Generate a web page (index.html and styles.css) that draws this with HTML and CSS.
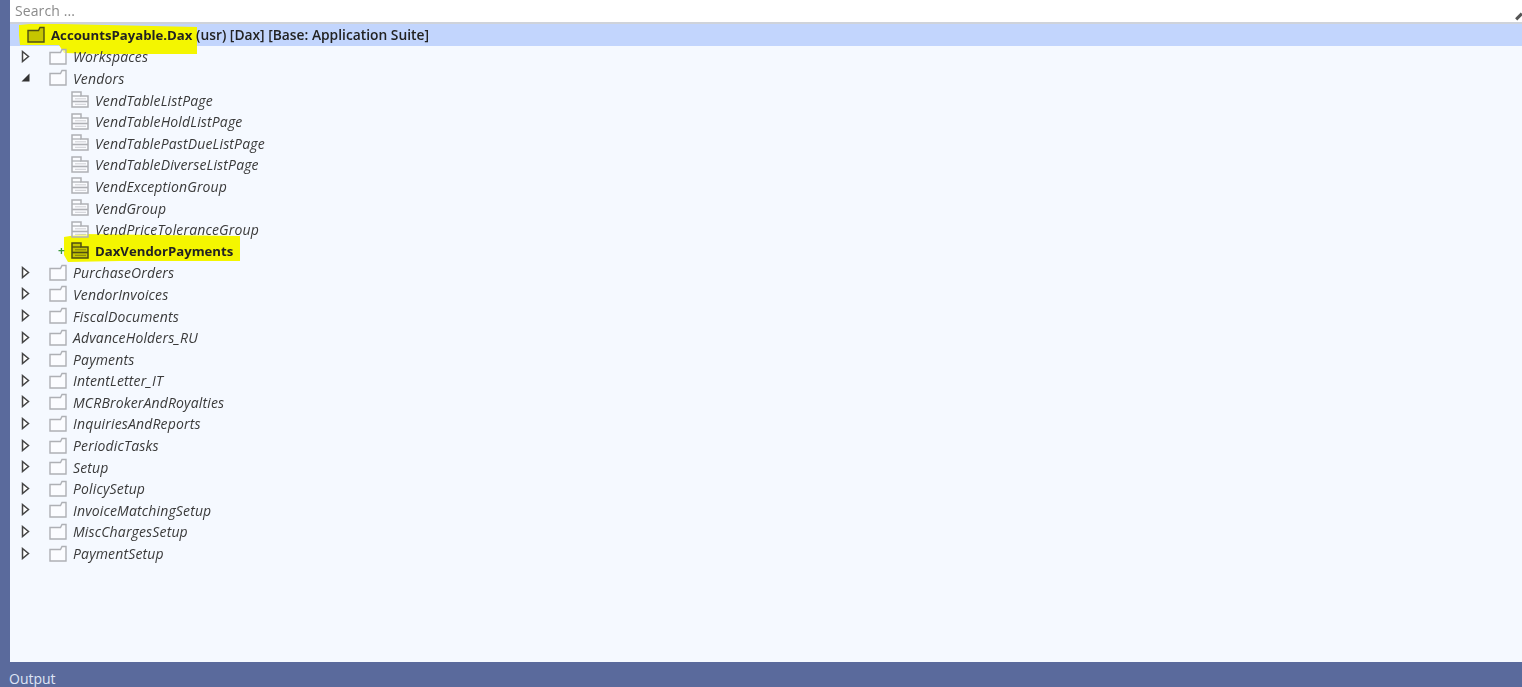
FILE: index.html
```html
<!DOCTYPE html>
<html lang="en">
<head>
    <meta charset="UTF-8">
    <title>AccountsPayable.Dax</title>
    <link rel="stylesheet" href="styles.css">
</head>
<body>
    <svg class="sprite" width="0" height="0">
        <symbol id="folder" viewBox="0 0 18 17">
            <path d="M1 4.5h10.5l1.5-3h4v14.500H1z" fill="var(--icon-fill)" stroke="currentColor" stroke-width="1.4"/>
        </symbol>
        <symbol id="form" viewBox="0 0 18 17">
            <path d="M1 1h9v4h7v11H1z" fill="var(--icon-fill)" stroke="currentColor" stroke-width="1.5"/>
            <path d="M1 5h9" stroke="currentColor" stroke-width="1.3"/>
            <path d="M1 10.500h16" stroke="currentColor" stroke-width="1.6"/>
            <path d="M4 7.800h11M4 13.300h11" stroke="currentColor" stroke-width="1" stroke-opacity="0.6"/>
        </symbol>
        <symbol id="closed" viewBox="0 0 9 13">
            <path d="M1.500 1.500l6 5-6 5z" fill="#fff" stroke="#444" stroke-width="1.500"/>
        </symbol>
        <symbol id="open" viewBox="0 0 9 9">
            <path d="M8.500 0.500v8h-8z" fill="#333"/>
        </symbol>
    </svg>

    <div class="shell">
        <main class="pane">
            <div class="search">
                <span class="search-text">Search ...</span>
                <span class="search-handle"></span>
            </div>
            <div class="tree">
                <!-- marker strokes go under the text -->
                <svg class="marker" width="600" height="260" viewBox="0 0 600 260">
                    <path d="M9 1l21-2 16-1 6 2 135 3v27H90l-36-1-5-8H10L9 11z" fill="#f4f600"/>
                    <path d="M54 213l18-3 158 2v25H110l-52 1-4-7z" fill="#f4f600"/>
                </svg>

                <div class="row root selected">
                    <svg class="icon dark"><use href="#folder"/></svg>
                    <span class="label"><b>AccountsPayable.Dax</b> <span class="meta">(usr) [Dax] [Base: Application Suite]</span></span>
                </div>
                <div class="row"><span class="toggle"><svg class="arrow-closed"><use href="#closed"/></svg></span><svg class="icon"><use href="#folder"/></svg><span class="label">Workspaces</span></div>
                <div class="row"><span class="toggle"><svg class="arrow-open"><use href="#open"/></svg></span><svg class="icon"><use href="#folder"/></svg><span class="label">Vendors</span></div>
                <div class="row child"><span class="toggle"></span><svg class="icon"><use href="#form"/></svg><span class="label">VendTableListPage</span></div>
                <div class="row child"><span class="toggle"></span><svg class="icon"><use href="#form"/></svg><span class="label">VendTableHoldListPage</span></div>
                <div class="row child"><span class="toggle"></span><svg class="icon"><use href="#form"/></svg><span class="label">VendTablePastDueListPage</span></div>
                <div class="row child"><span class="toggle"></span><svg class="icon"><use href="#form"/></svg><span class="label">VendTableDiverseListPage</span></div>
                <div class="row child"><span class="toggle"></span><svg class="icon"><use href="#form"/></svg><span class="label">VendExceptionGroup</span></div>
                <div class="row child"><span class="toggle"></span><svg class="icon"><use href="#form"/></svg><span class="label">VendGroup</span></div>
                <div class="row child"><span class="toggle"></span><svg class="icon"><use href="#form"/></svg><span class="label">VendPriceToleranceGroup</span></div>
                <div class="row child added"><span class="toggle"><span class="plus">+</span></span><svg class="icon dark"><use href="#form"/></svg><span class="label"><b>DaxVendorPayments</b></span></div>
                <div class="row"><span class="toggle"><svg class="arrow-closed"><use href="#closed"/></svg></span><svg class="icon"><use href="#folder"/></svg><span class="label">PurchaseOrders</span></div>
                <div class="row"><span class="toggle"><svg class="arrow-closed"><use href="#closed"/></svg></span><svg class="icon"><use href="#folder"/></svg><span class="label">VendorInvoices</span></div>
                <div class="row"><span class="toggle"><svg class="arrow-closed"><use href="#closed"/></svg></span><svg class="icon"><use href="#folder"/></svg><span class="label">FiscalDocuments</span></div>
                <div class="row"><span class="toggle"><svg class="arrow-closed"><use href="#closed"/></svg></span><svg class="icon"><use href="#folder"/></svg><span class="label">AdvanceHolders_RU</span></div>
                <div class="row"><span class="toggle"><svg class="arrow-closed"><use href="#closed"/></svg></span><svg class="icon"><use href="#folder"/></svg><span class="label">Payments</span></div>
                <div class="row"><span class="toggle"><svg class="arrow-closed"><use href="#closed"/></svg></span><svg class="icon"><use href="#folder"/></svg><span class="label">IntentLetter_IT</span></div>
                <div class="row"><span class="toggle"><svg class="arrow-closed"><use href="#closed"/></svg></span><svg class="icon"><use href="#folder"/></svg><span class="label">MCRBrokerAndRoyalties</span></div>
                <div class="row"><span class="toggle"><svg class="arrow-closed"><use href="#closed"/></svg></span><svg class="icon"><use href="#folder"/></svg><span class="label">InquiriesAndReports</span></div>
                <div class="row"><span class="toggle"><svg class="arrow-closed"><use href="#closed"/></svg></span><svg class="icon"><use href="#folder"/></svg><span class="label">PeriodicTasks</span></div>
                <div class="row"><span class="toggle"><svg class="arrow-closed"><use href="#closed"/></svg></span><svg class="icon"><use href="#folder"/></svg><span class="label">Setup</span></div>
                <div class="row"><span class="toggle"><svg class="arrow-closed"><use href="#closed"/></svg></span><svg class="icon"><use href="#folder"/></svg><span class="label">PolicySetup</span></div>
                <div class="row"><span class="toggle"><svg class="arrow-closed"><use href="#closed"/></svg></span><svg class="icon"><use href="#folder"/></svg><span class="label">InvoiceMatchingSetup</span></div>
                <div class="row"><span class="toggle"><svg class="arrow-closed"><use href="#closed"/></svg></span><svg class="icon"><use href="#folder"/></svg><span class="label">MiscChargesSetup</span></div>
                <div class="row"><span class="toggle"><svg class="arrow-closed"><use href="#closed"/></svg></span><svg class="icon"><use href="#folder"/></svg><span class="label">PaymentSetup</span></div>
            </div>
        </main>
        <footer class="status">Output</footer>
    </div>
</body>
</html>
```

FILE: styles.css
```css
* {
    box-sizing: border-box;
}

html,
body {
    height: 100%;
}

body {
    margin: 0;
    overflow: hidden;
    background-color: #5a6a9c;
    font-family: 'Open Sans', 'Noto Sans', sans-serif;
    font-size: 14px;
    color: #3a3a3a;
}

.sprite {
    display: block;
}

.shell {
    display: flex;
    flex-direction: column;
    height: 687px;
    padding-left: 10px;
}

.pane {
    flex: 1;
    display: flex;
    flex-direction: column;
    background-color: #f5f9ff;
    filter: blur(0.35px);
}

.search {
    height: 24px;
    display: flex;
    align-items: center;
    justify-content: space-between;
    padding: 0 0 1px 5px;
    background-color: #fff;
    border-bottom: 2px solid #cfd3da;
    color: #8a8a8a;
    letter-spacing: 0.1px;
}

.search-handle {
    width: 8px;
    height: 3px;
    margin: 12px -1px 0 0;
    background-color: #555;
    transform: rotate(-45deg);
}

.tree {
    position: relative;
    flex: 1;
}

.marker {
    position: absolute;
    top: 0;
    left: 0;
    z-index: 0;
}

.row {
    height: 21.6px;
    display: flex;
    align-items: center;
    padding-left: 11px;
    white-space: nowrap;
}

.row.root {
    padding-left: 17px;
}

.row.child {
    padding-left: 33px;
}

.selected {
    background-color: #c2d5fd;
}

.toggle {
    width: 28px;
    flex: none;
    display: flex;
    align-items: center;
}

.arrow-closed {
    width: 9px;
    height: 13px;
    display: block;
}

.arrow-open {
    width: 9px;
    height: 9px;
    display: block;
}

.plus {
    position: relative;
    z-index: 1;
    margin-left: 15px;
    color: #3c9a3c;
    font-size: 12px;
    font-weight: 700;
    line-height: 1;
}

.icon {
    --icon-fill: rgba(255, 255, 255, 0.55);
    position: relative;
    z-index: 1;
    width: 18px;
    height: 17px;
    flex: none;
    margin-right: 6px;
    color: #aeb0b5;
}

.icon.dark {
    --icon-fill: #c6c600;
    color: #4e4e12;
}

.label {
    position: relative;
    z-index: 1;
    padding-top: 1px;
    font-style: italic;
    letter-spacing: 0.15px;
}

.root .label,
.added .label {
    padding-top: 0;
    font-style: normal;
    color: #222;
    letter-spacing: 0;
}

.label b {
    font-size: 13.2px;
}

.meta {
    font-size: 13.8px;
    font-weight: 600;
}

.status {
    height: 25px;
    padding: 9px 0 0 0;
    margin-left: -1px;
    color: #dfe5f5;
    font-size: 14px;
    line-height: 16px;
}
```
